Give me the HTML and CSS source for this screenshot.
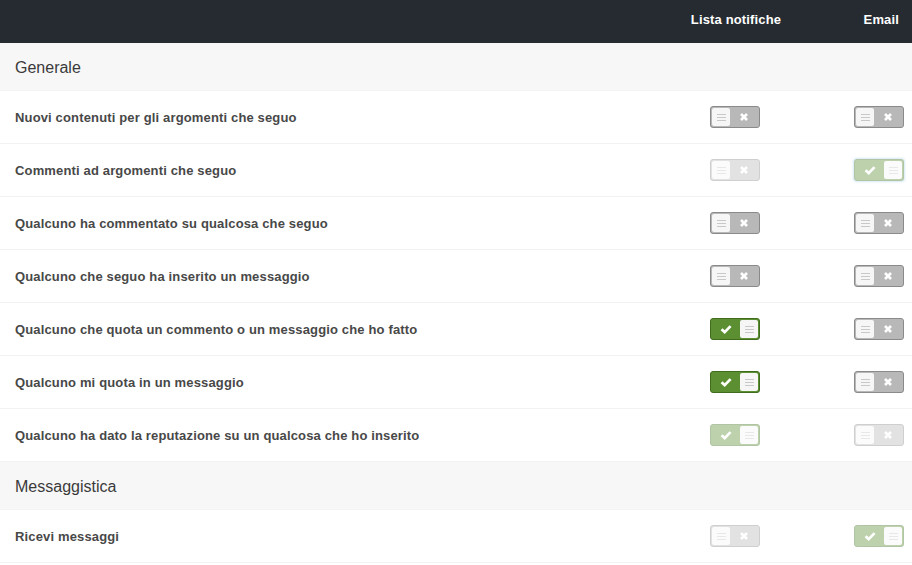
FILE: index.html
```html
<!DOCTYPE html>
<html lang="it">
<head>
<meta charset="utf-8">
<title>Notifiche</title>
<link rel="stylesheet" href="styles.css">
</head>
<body>
<div class="page">
  <div class="topbar grid">
    <div></div>
    <div class="colhead">Lista notifiche</div>
    <div class="colhead">Email</div>
  </div>

  <div class="section">Generale</div>

  <div class="row grid">
    <div class="label">Nuovi contenuti per gli argomenti che seguo</div>
    <div class="cell"><span class="tg off"><span class="knob"><i></i></span><span class="ic"><svg viewBox="0 0 10 10"><path d="M2 2L8 8M8 2L2 8"/></svg></span></span></div>
    <div class="cell"><span class="tg off"><span class="knob"><i></i></span><span class="ic"><svg viewBox="0 0 10 10"><path d="M2 2L8 8M8 2L2 8"/></svg></span></span></div>
  </div>
  <div class="row grid">
    <div class="label">Commenti ad argomenti che seguo</div>
    <div class="cell"><span class="tg off dis"><span class="knob"><i></i></span><span class="ic"><svg viewBox="0 0 10 10"><path d="M2 2L8 8M8 2L2 8"/></svg></span></span></div>
    <div class="cell"><span class="tg on dis focus"><span class="ic"><svg class="ck" viewBox="0 0 10 10"><path d="M1.3 5.2L3.9 7.6L8.8 2.6"/></svg></span><span class="knob"><i></i></span></span></div>
  </div>
  <div class="row grid">
    <div class="label">Qualcuno ha commentato su qualcosa che seguo</div>
    <div class="cell"><span class="tg off"><span class="knob"><i></i></span><span class="ic"><svg viewBox="0 0 10 10"><path d="M2 2L8 8M8 2L2 8"/></svg></span></span></div>
    <div class="cell"><span class="tg off"><span class="knob"><i></i></span><span class="ic"><svg viewBox="0 0 10 10"><path d="M2 2L8 8M8 2L2 8"/></svg></span></span></div>
  </div>
  <div class="row grid">
    <div class="label">Qualcuno che seguo ha inserito un messaggio</div>
    <div class="cell"><span class="tg off"><span class="knob"><i></i></span><span class="ic"><svg viewBox="0 0 10 10"><path d="M2 2L8 8M8 2L2 8"/></svg></span></span></div>
    <div class="cell"><span class="tg off"><span class="knob"><i></i></span><span class="ic"><svg viewBox="0 0 10 10"><path d="M2 2L8 8M8 2L2 8"/></svg></span></span></div>
  </div>
  <div class="row grid">
    <div class="label">Qualcuno che quota un commento o un messaggio che ho fatto</div>
    <div class="cell"><span class="tg on"><span class="ic"><svg class="ck" viewBox="0 0 10 10"><path d="M1.3 5.2L3.9 7.6L8.8 2.6"/></svg></span><span class="knob"><i></i></span></span></div>
    <div class="cell"><span class="tg off"><span class="knob"><i></i></span><span class="ic"><svg viewBox="0 0 10 10"><path d="M2 2L8 8M8 2L2 8"/></svg></span></span></div>
  </div>
  <div class="row grid">
    <div class="label">Qualcuno mi quota in un messaggio</div>
    <div class="cell"><span class="tg on"><span class="ic"><svg class="ck" viewBox="0 0 10 10"><path d="M1.3 5.2L3.9 7.6L8.8 2.6"/></svg></span><span class="knob"><i></i></span></span></div>
    <div class="cell"><span class="tg off"><span class="knob"><i></i></span><span class="ic"><svg viewBox="0 0 10 10"><path d="M2 2L8 8M8 2L2 8"/></svg></span></span></div>
  </div>
  <div class="row grid">
    <div class="label">Qualcuno ha dato la reputazione su un qualcosa che ho inserito</div>
    <div class="cell"><span class="tg on dis"><span class="ic"><svg class="ck" viewBox="0 0 10 10"><path d="M1.3 5.2L3.9 7.6L8.8 2.6"/></svg></span><span class="knob"><i></i></span></span></div>
    <div class="cell"><span class="tg off dis"><span class="knob"><i></i></span><span class="ic"><svg viewBox="0 0 10 10"><path d="M2 2L8 8M8 2L2 8"/></svg></span></span></div>
  </div>

  <div class="section">Messaggistica</div>

  <div class="row grid">
    <div class="label">Ricevi messaggi</div>
    <div class="cell"><span class="tg off dis"><span class="knob"><i></i></span><span class="ic"><svg viewBox="0 0 10 10"><path d="M2 2L8 8M8 2L2 8"/></svg></span></span></div>
    <div class="cell"><span class="tg on dis"><span class="ic"><svg class="ck" viewBox="0 0 10 10"><path d="M1.3 5.2L3.9 7.6L8.8 2.6"/></svg></span><span class="knob"><i></i></span></span></div>
  </div>
</div>
</body>
</html>
```
FILE: styles.css
```css
html, body {
  margin: 0;
  padding: 0;
  background: #ffffff;
}
body {
  font-family: "Liberation Sans", Arial, sans-serif;
  color: #444;
}
.page {
  width: 912px;
}
.grid {
  display: grid;
  grid-template-columns: 1fr 144px 66px;
  column-gap: 39px;
  align-items: center;
}
.topbar {
  height: 43px;
  background: #262b32;
  column-gap: 0;
  grid-template-columns: 1fr 144px 104px;
}
.colhead {
  color: #ffffff;
  font-weight: bold;
  font-size: 13px;
  letter-spacing: 0.15px;
  text-align: center;
  padding-bottom: 4px;
}
.colhead:last-child {
  text-align: right;
  padding-right: 13px;
}
.section {
  height: 48px;
  line-height: 50px;
  background: #f7f7f7;
  padding-left: 15px;
  font-size: 16px;
  color: #3a3a3a;
  border-bottom: 1px solid #f4f4f4;
  box-sizing: border-box;
}
.row {
  height: 53px;
  box-sizing: border-box;
  border-bottom: 1px solid #f2f2f2;
}
.label {
  padding-left: 15px;
  font-size: 13px;
  font-weight: bold;
  color: #484848;
  letter-spacing: 0.15px;
}
.cell {
  display: flex;
  justify-content: center;
}
.tg {
  display: flex;
  width: 50px;
  height: 22px;
  box-sizing: border-box;
  border: 1px solid #8a8a8a;
  border-radius: 3px;
  padding: 1px;
  background: #b8b8b8;
}
.tg.on {
  background: #5b8f31;
  border-color: #3f6d1d;
}
.tg.dis {
  opacity: 0.4;
}
.tg.focus {
  box-shadow: 0 0 2px 1px rgba(120, 180, 230, 0.7);
}
.knob {
  width: 18px;
  height: 18px;
  background: #f6f6f6;
  border-radius: 2px;
  display: flex;
  align-items: center;
  justify-content: center;
}
.knob i {
  display: block;
  width: 9px;
  height: 7px;
  border-top: 1px solid #c8c8c8;
  border-bottom: 1px solid #c8c8c8;
  box-sizing: border-box;
  position: relative;
}
.knob i::after {
  content: "";
  position: absolute;
  left: 0;
  right: 0;
  top: 2px;
  border-top: 1px solid #c8c8c8;
}
.ic {
  flex: 1;
  display: flex;
  align-items: center;
  justify-content: center;
}
.ic svg {
  width: 10px;
  height: 10px;
  fill: none;
  stroke: #ffffff;
  stroke-width: 2.6;
}
.ic svg.ck {
  width: 12px;
  height: 12px;
  stroke-width: 2.3;
}
```
